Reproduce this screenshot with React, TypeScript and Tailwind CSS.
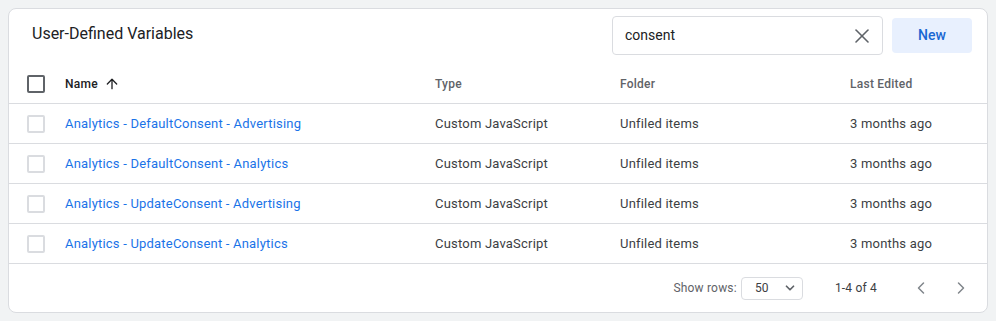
import { ArrowUp, ChevronDown, ChevronLeft, ChevronRight, X } from 'lucide-react'

const rows = [
  'Analytics - DefaultConsent - Advertising',
  'Analytics - DefaultConsent - Analytics',
  'Analytics - UpdateConsent - Advertising',
  'Analytics - UpdateConsent - Analytics',
]

export default function App() {
  return (
    <div className="min-h-[321px] bg-[#f1f3f4] pt-2 px-2 font-['Roboto',sans-serif]">
      <div className="w-[980px] h-[305px] bg-white rounded-lg border border-[#dadce0] overflow-hidden flex flex-col">
        {/* header */}
        <div className="h-[55px] flex items-start pl-[23px] pr-[15px] pt-[7px]">
          <h2 className="mt-[8px] text-[16px] leading-5 text-[#202124]">User-Defined Variables</h2>
          <div className="ml-auto w-[271px] h-[39px] border border-[#dadce0] rounded flex items-center pl-3 pr-2">
            <span className="text-[14px] text-[#202124]">consent</span>
            <X className="ml-auto w-6 h-6 text-[#5f6368]" strokeWidth={1.6} />
          </div>
          <button className="ml-[9px] mt-[2px] w-[80px] h-[35px] rounded bg-[#e8f0fe] text-[#1967d2] text-[14px] font-medium">
            New
          </button>
        </div>

        {/* column headers */}
        <div className="h-[40px] flex items-center border-b border-[#dadce0] text-[12px] font-medium tracking-[0.25px] text-[#5f6368]">
          <div className="w-[56px] pl-[18px]">
            <div className="w-[18px] h-[18px] border-2 border-[#5f6368] rounded-[2px]" />
          </div>
          <div className="w-[370px] flex items-center gap-1.5 text-[#202124]">
            Name <ArrowUp className="w-4 h-4" strokeWidth={2} />
          </div>
          <div className="w-[185px]">Type</div>
          <div className="w-[230px]">Folder</div>
          <div>Last Edited</div>
        </div>

        {rows.map((r) => (
          <div key={r} className="h-[40px] flex items-center border-b border-[#dadce0] text-[13px] tracking-[0.2px] text-[#3c4043]">
            <div className="w-[56px] pl-[18px]">
              <div className="w-[18px] h-[18px] border-2 border-[#dadce0] rounded-[2px]" />
            </div>
            <div className="w-[370px] text-[#1a73e8]">{r}</div>
            <div className="w-[185px]">Custom JavaScript</div>
            <div className="w-[230px]">Unfiled items</div>
            <div>3 months ago</div>
          </div>
        ))}

        {/* footer */}
        <div className="flex-1 flex items-center justify-end pr-[16px] text-[12px] tracking-[0.2px] text-[#5f6368]">
          <span>Show rows:</span>
          <div className="ml-[4px] w-[62px] h-[23px] border border-[#dadce0] rounded flex items-center pl-[13px] pr-[5px] text-[#3c4043]">
            50
            <ChevronDown className="ml-auto w-3.5 h-3.5 text-[#5f6368]" strokeWidth={3} />
          </div>
          <span className="ml-[32px] text-[#3c4043]">1-4 of 4</span>
          <ChevronLeft className="ml-[34px] w-5 h-5 text-[#80868b]" strokeWidth={1.8} />
          <ChevronRight className="ml-[20px] w-5 h-5 text-[#80868b]" strokeWidth={1.8} />
        </div>
      </div>
    </div>
  )
}
